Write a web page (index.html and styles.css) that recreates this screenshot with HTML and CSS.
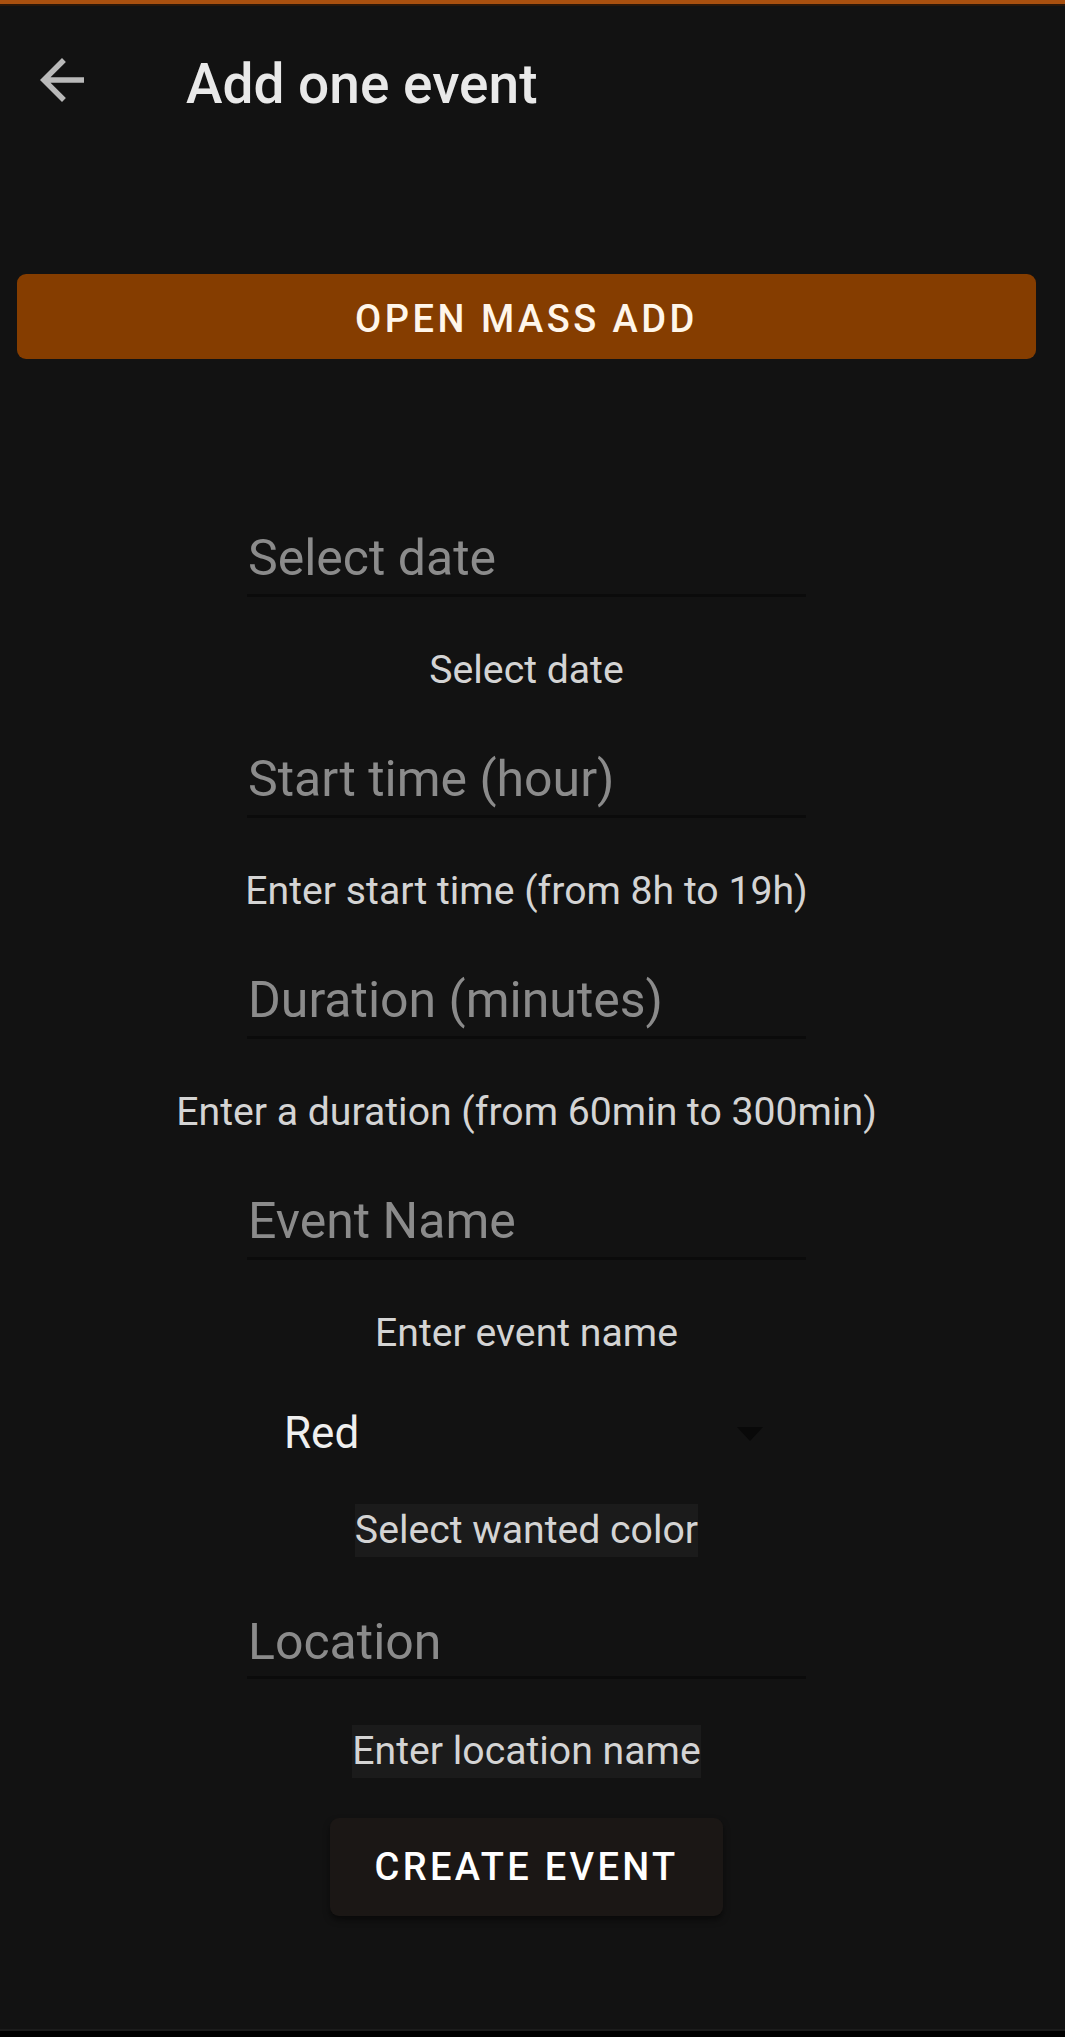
FILE: index.html
```html
<!DOCTYPE html>
<html>
<head>
<meta charset="utf-8">
<link rel="stylesheet" href="styles.css">
</head>
<body>
<div class="topband"></div>
<header class="header">
  <svg class="back" viewBox="0 0 24 24" width="66" height="66"><path d="M20 11H7.83l5.59-5.59L12 4l-8 8 8 8 1.41-1.41L7.83 13H20v-2z" fill="#b9b9b9"/></svg>
  <h1 class="title">Add one event</h1>
</header>
<div class="mass">OPEN MASS ADD</div>
<main class="form">
  <div class="field">Select date</div>
  <div class="helper">Select date</div>
  <div class="field">Start time (hour)</div>
  <div class="helper">Enter start time (from 8h to 19h)</div>
  <div class="field">Duration (minutes)</div>
  <div class="helper">Enter a duration (from 60min to 300min)</div>
  <div class="field">Event Name</div>
  <div class="helper">Enter event name</div>
  <div class="spinner"><span class="spin-value">Red</span><span class="tri"></span></div>
  <div class="helper boxed first-box">Select wanted color</div>
  <div class="field location">Location</div>
  <div class="helper boxed second-box">Enter location name</div>
  <div class="create">CREATE EVENT</div>
</main>
<footer class="footer"></footer>
</body>
</html>
```
FILE: styles.css
```css
html, body {
  margin: 0;
  padding: 0;
}
body {
  background: #121212;
  font-family: Roboto, "Noto Sans", sans-serif;
  min-height: 100vh;
  display: flex;
  flex-direction: column;
  overflow: hidden;
}
.topband {
  height: 4px;
  background: #a9500f;
  border-bottom: 2px solid #2a1709;
}
.header {
  height: 148px;
  display: flex;
  align-items: flex-start;
}
.back {
  display: block;
  margin-top: 41px;
  margin-left: 29px;
}
.title {
  margin: 46px 0 0 91px;
  font-size: 55px;
  line-height: 64px;
  font-weight: 500;
  color: #e9e9e9;
}
.mass {
  margin: 120px 29px 0 17px;
  height: 85px;
  box-sizing: border-box;
  padding-top: 5px;
  background: #853d00;
  border-radius: 9px;
  display: flex;
  align-items: center;
  justify-content: center;
  color: #fff6ea;
  font-size: 38px;
  font-weight: 500;
  letter-spacing: 3.5px;
}
.form {
  width: 559px;
  margin: 169px 0 0 247px;
  display: flex;
  flex-direction: column;
  align-items: center;
}
.field {
  align-self: stretch;
  font-size: 50px;
  line-height: 60px;
  color: #8b8b8b;
  padding-bottom: 6px;
  border-bottom: 3px solid #0b0b0b;
  padding-left: 1px;
}
.helper {
  margin-top: 50px;
  margin-bottom: 56px;
  font-size: 39.2px;
  line-height: 46px;
  color: #d4d4d4;
  white-space: nowrap;
}
.spinner {
  align-self: stretch;
  height: 52px;
  display: flex;
  align-items: center;
  justify-content: space-between;
  padding: 0 43px 0 37px;
  margin-top: -5px;
}
.spin-value {
  font-size: 44px;
  line-height: 52px;
  color: #efefef;
}
.tri {
  width: 0;
  height: 0;
  border-left: 13px solid transparent;
  border-right: 13px solid transparent;
  border-top: 14px solid #090909;
  margin-top: 1px;
}
.boxed {
  background: #1b1b1b;
  line-height: 53px;
  margin-bottom: 0;
}
.first-box {
  margin-top: 45px;
  margin-bottom: 55px;
}
.location {
  padding-bottom: 4px;
}
.second-box {
  margin-top: 46px;
  line-height: 53px;
}
.create {
  margin-top: 40px;
  width: 393px;
  height: 98px;
  background: #1b1715;
  border-radius: 9px;
  box-shadow: 0 4px 6px rgba(0, 0, 0, 0.5);
  display: flex;
  align-items: center;
  justify-content: center;
  color: #ffffff;
  font-size: 38px;
  font-weight: 500;
  letter-spacing: 3.3px;
}
.footer {
  margin-top: auto;
  height: 6px;
  background: #000;
  border-top: 2px solid #1b1b1b;
}
```
